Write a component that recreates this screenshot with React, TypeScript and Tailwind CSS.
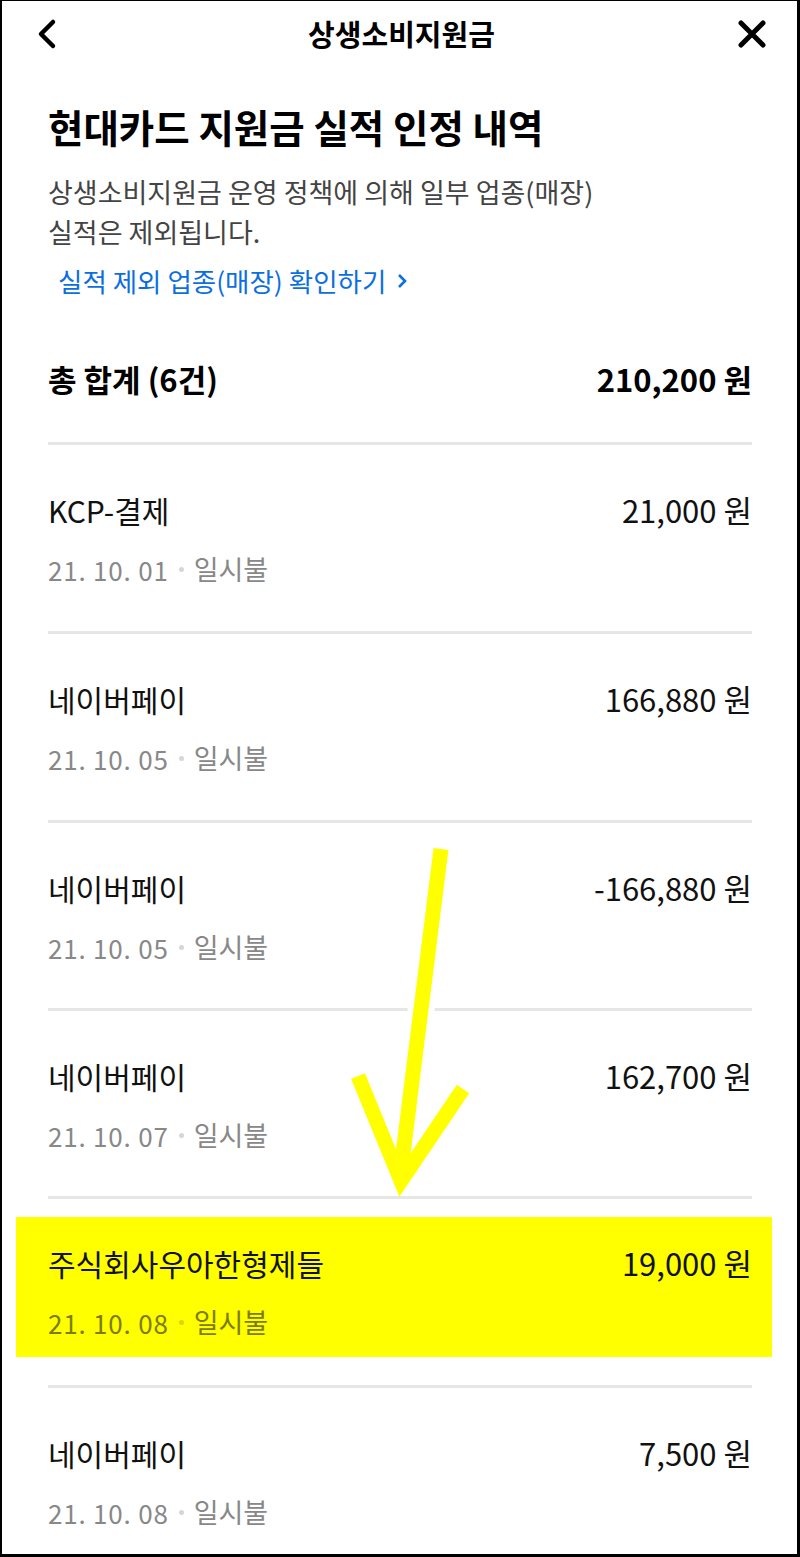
import React from "react";

const FONT = { fontFamily: '"Noto Sans CJK KR", "Noto Sans", sans-serif' };

const ROWS = [
  { name: "KCP-결제", amount: "21,000", date: "21. 10. 01", pb: "pb-[45px]" },
  { name: "네이버페이", amount: "166,880", date: "21. 10. 05", pb: "pb-[45px]" },
  { name: "네이버페이", amount: "-166,880", date: "21. 10. 05", pb: "pb-[44px]" },
  { name: "네이버페이", amount: "162,700", date: "21. 10. 07", pb: "pb-[44px]" },
  { name: "주식회사우아한형제들", amount: "19,000", date: "21. 10. 08", pb: "", mark: true },
  { name: "네이버페이", amount: "7,500", date: "21. 10. 08", pb: "pb-[40px]" },
];

type Row = { name: string; amount: string; date: string; mark?: boolean };

function RowBody({ name, amount, date, mark }: Row) {
  return (
    <>
      <div className="flex items-center justify-between h-[40px] text-[30px] text-[#111]">
        <span>{name}</span>
        <span className="text-[31px]">{amount} 원</span>
      </div>
      <div className={`mt-[22px] h-[34px] flex items-center ${mark ? "text-[#7c7c00]" : "text-[#888]"}`}>
        <span className="text-[26px] tracking-[0.8px]">{date}</span>
        <span className={`ml-[10px] mr-[10px] w-[5px] h-[5px] rounded-full ${mark ? "bg-[#d8d800]" : "bg-[#d6d6d6]"}`} />
        <span className="text-[27px]">일시불</span>
      </div>
    </>
  );
}

export default function App() {
  return (
    <div
      className="relative w-[800px] h-[1557px] overflow-hidden bg-white border-black border-l-2 border-t border-r-[3px] border-b-[3px]"
      style={FONT}
    >
      {/* header */}
      <div className="grid grid-cols-[1fr_auto_1fr] items-center h-[66px] pl-[33px] pr-[29px]">
        <svg width="24" height="32" viewBox="0 0 24 32" className="justify-self-start">
          <polyline points="18,4 6,16 18,28" fill="none" stroke="#000" strokeWidth="4.5" strokeLinecap="round" strokeLinejoin="round" />
        </svg>
        <div className="text-[29px] font-semibold text-black">상생소비지원금</div>
        <svg width="32" height="32" viewBox="0 0 32 32" className="justify-self-end">
          <path d="M5 5 L27 27 M27 5 L5 27" stroke="#000" strokeWidth="5" strokeLinecap="round" />
        </svg>
      </div>

      <div className="pl-[46px] pr-[45px]">
        <h1 className="mt-[35px] text-[38.5px] leading-[48px] font-bold text-black">현대카드 지원금 실적 인정 내역</h1>
        <p className="mt-[22px] text-[27px] leading-[40px] text-[#444]">
          상생소비지원금 운영 정책에 의해 일부 업종(매장)
          <br />
          실적은 제외됩니다.
        </p>
        <div className="mt-[9px] ml-[10px] flex items-center h-[40px] text-[26.5px] text-[#0b6fe0]">
          <span>실적 제외 업종(매장) 확인하기</span>
          <svg width="12" height="16" viewBox="0 0 12 16" className="ml-[10px]">
            <polyline points="3,2 9,8 3,14" fill="none" stroke="#0b6fe0" strokeWidth="2.6" />
          </svg>
        </div>

        {/* total */}
        <div className="mt-[58px] flex items-center justify-between h-[40px] text-[31px] font-bold text-black">
          <span>총 합계 (6건)</span>
          <span>210,200 원</span>
        </div>

        <div className="mt-[43px]">
          {ROWS.map((r, i) => (
            <div key={i}>
              <div className="h-[3px] bg-[#e6e6e6]" />
              {r.mark ? (
                <div className="pt-[18px] pb-[28px]">
                  <div className="-ml-[32px] -mr-[20px] pl-[32px] pr-[20px] pt-[26px] pb-[18px] bg-[#ffff00]">
                    <RowBody {...r} />
                  </div>
                </div>
              ) : (
                <div className={`pt-[45px] ${r.pb}`}>
                  <RowBody {...r} />
                </div>
              )}
            </div>
          ))}
        </div>
      </div>

      {/* hand-drawn arrow annotation */}
      <svg
        className="absolute left-0 top-0 pointer-events-none"
        width="795"
        height="1553"
        viewBox="2 1 795 1553"
      >
        <path d="M441 849 L410 1100" stroke="#fff" strokeWidth="27" />
        <path d="M441 849 L400 1178" stroke="#ffff00" strokeWidth="15" fill="none" />
        <polyline points="358,1076 401,1181 463,1089" stroke="#ffff00" strokeWidth="15" fill="none" strokeLinejoin="miter" strokeMiterlimit="10" />
      </svg>
    </div>
  );
}
